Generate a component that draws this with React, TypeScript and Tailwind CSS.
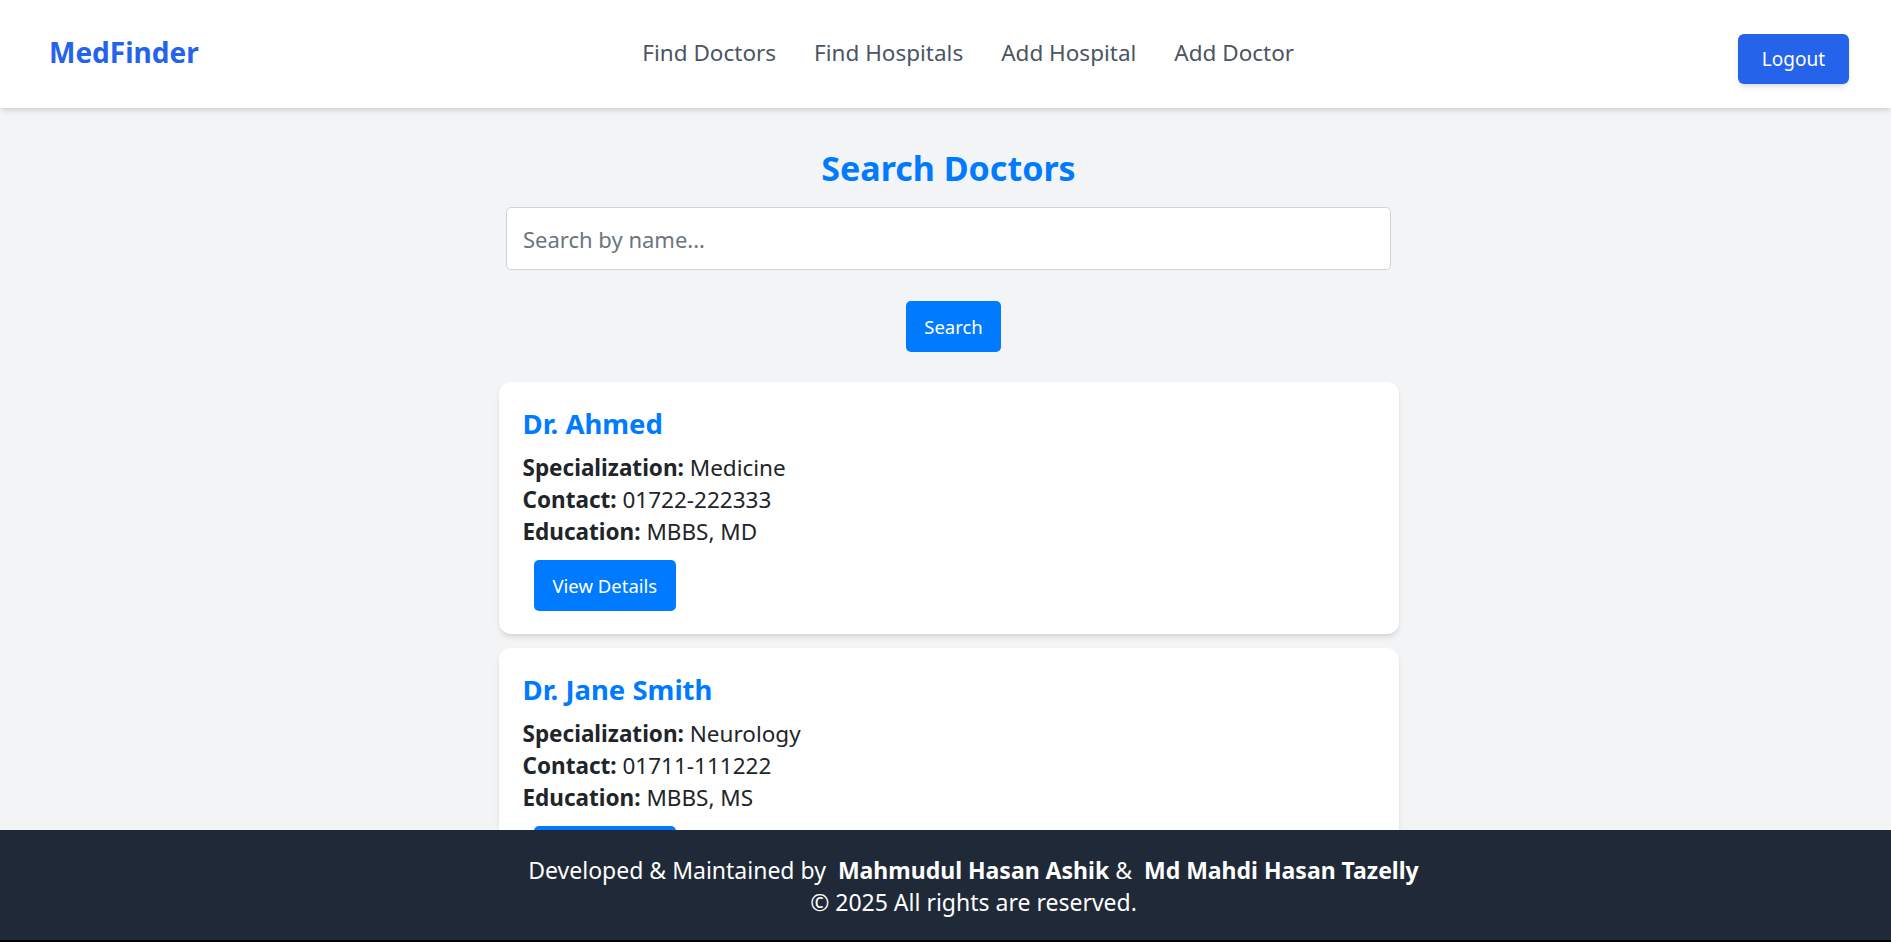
import React from "react";

const doctors = [
  { name: "Dr. Ahmed", specialization: "Medicine", contact: "01722-222333", education: "MBBS, MD" },
  { name: "Dr. Jane Smith", specialization: "Neurology", contact: "01711-111222", education: "MBBS, MS" },
];

const navLinks = ["Find Doctors", "Find Hospitals", "Add Hospital", "Add Doctor"];

export default function App() {
  return (
    <div className="min-h-screen bg-[#f3f4f6] font-['Noto_Sans',sans-serif] pb-[120px]">
      {/* Navbar */}
      <header className="h-[108px] bg-white shadow-md flex items-center justify-between pl-[49px] pr-[42px]">
        <div className="text-[28px] font-bold text-[#2563eb] -mt-[4px]">MedFinder</div>
        <nav className="flex items-center gap-[38px] -mt-[2px]">
          {navLinks.map((l) => (
            <a key={l} href="#" className="text-[22.5px] text-[#4b5563]">
              {l}
            </a>
          ))}
        </nav>
        <button className="mt-[10px] h-[50px] px-6 bg-[#2563eb] text-white text-[19px] rounded-md shadow-md">
          Logout
        </button>
      </header>

      {/* Search */}
      <main className="flex flex-col items-center pl-[6px]">
        <h2 className="mt-[39px] text-[34px] leading-[42px] font-bold text-[#007bff]">Search Doctors</h2>
        <input
          type="text"
          placeholder="Search by name..."
          className="mt-[18px] w-[885px] h-[63px] px-4 bg-white border border-[#ced4da] rounded-[5px] text-[22px] placeholder:text-[#6c757d] outline-none"
        />
        <button className="mt-[31px] ml-[10px] h-[51px] px-[18px] bg-[#007bff] text-white text-[18.5px] rounded-[5px]">
          Search
        </button>

        <div className="mt-[30px] w-[900px] flex flex-col gap-[14px]">
          {doctors.map((d) => (
            <div key={d.name} className="bg-white rounded-xl shadow-md p-6 h-[252px]">
              <h3 className="text-[27.5px] leading-[36px] font-bold text-[#007bff]">{d.name}</h3>
              <div className="mt-[10px] text-[22.5px] leading-[32px] text-[#212529]">
                <p>
                  <span className="font-bold">Specialization:</span> {d.specialization}
                </p>
                <p>
                  <span className="font-bold">Contact:</span> {d.contact}
                </p>
                <p>
                  <span className="font-bold">Education:</span> {d.education}
                </p>
              </div>
              <button className="mt-[12px] ml-[11px] h-[51px] px-[19px] bg-[#007bff] text-white text-[18.5px] rounded-[5px]">
                View Details
              </button>
            </div>
          ))}
        </div>
      </main>

      {/* Footer */}
      <footer className="fixed bottom-0 left-0 right-0 h-[112px] bg-[#1f2937] text-white text-center text-[23px] leading-[32px] pt-[24px] pl-[56px] border-b-2 border-black">
        <p>
          Developed &amp; Maintained by&nbsp; <span className="font-bold">Mahmudul Hasan Ashik</span> &amp;&nbsp;{" "}
          <span className="font-bold">Md Mahdi Hasan Tazelly</span>
        </p>
        <p>© 2025 All rights are reserved.</p>
      </footer>
    </div>
  );
}
